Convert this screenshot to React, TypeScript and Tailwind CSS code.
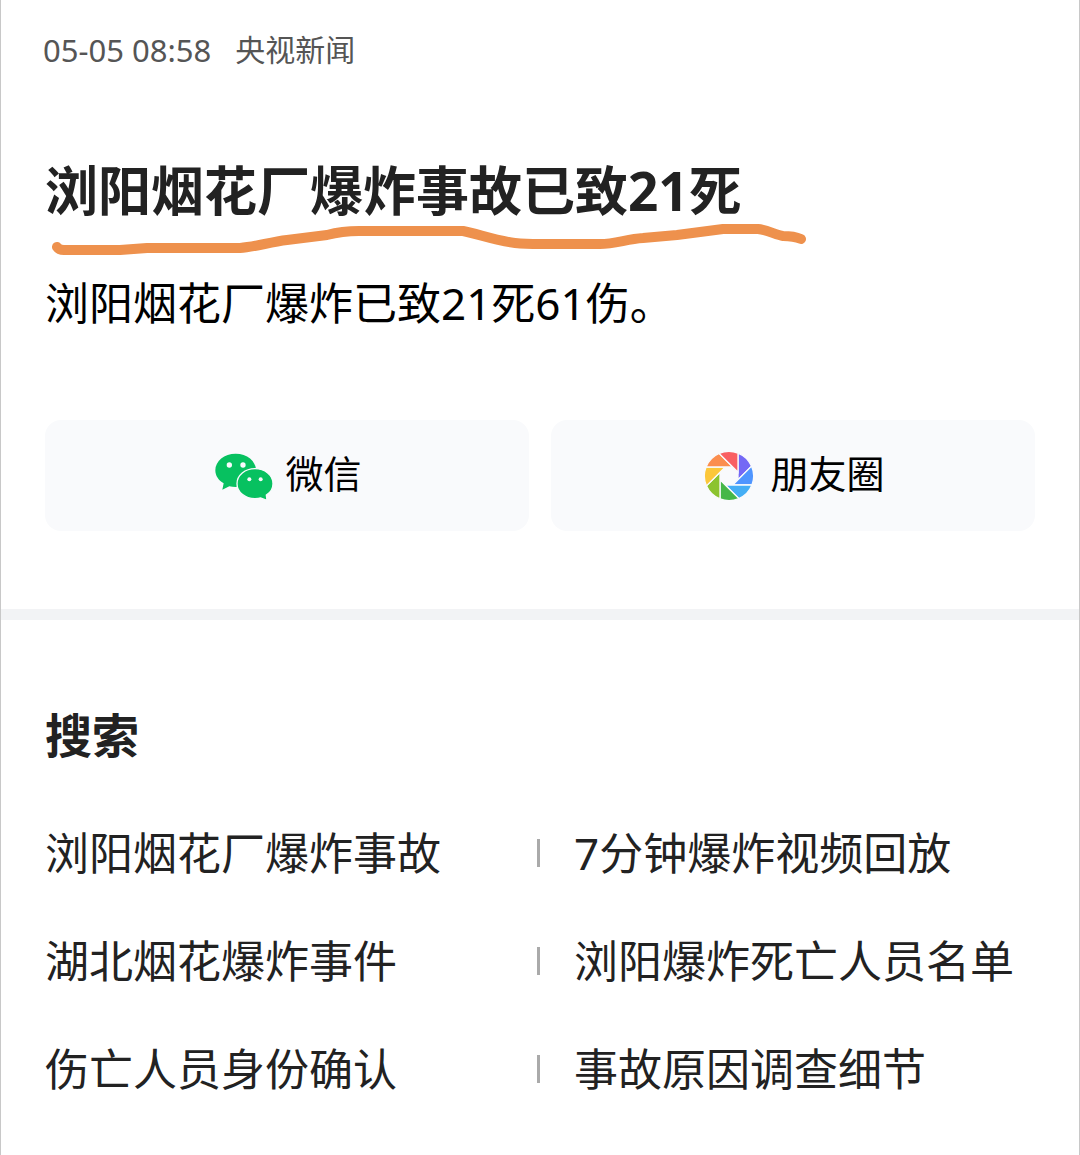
import React from 'react'

interface ShareButtonProps {
  icon: React.ReactNode
  label: string
}

interface SearchLinkProps {
  label: string
}

const searchRows = [
  ['浏阳烟花厂爆炸事故', '7分钟爆炸视频回放'],
  ['湖北烟花爆炸事件', '浏阳爆炸死亡人员名单'],
  ['伤亡人员身份确认', '事故原因调查细节'],
]

// clockwise, starting from the upper right blade
const bladeColors = ['#7468f5', '#4f95ff', '#45aef5', '#45b748', '#8cc32f', '#fcc73a', '#fb8e4f', '#f95f62']

function WeChatIcon() {
  return (
    <svg className="w-[58px] h-12 shrink-0" viewBox="45 55 174 144" aria-hidden="true">
      <path
        fill="#07c160"
        d="M107 60c34 0 61 22 61 50s-27 50-61 50c-7 0-13-1-19-2l-21 10 4-19c-16-9-25-23-25-39 0-28 27-50 61-50z"
      />
      <circle cx="88" cy="94" r="8" fill="#f9fafc" />
      <circle cx="129" cy="94" r="8" fill="#f9fafc" />
      <path
        fill="#07c160"
        stroke="#f9fafc"
        strokeWidth="4"
        d="M165 105c30 0 54 20 54 45 0 14-7 26-20 34l2 16-19-7c-6 2-11 2-17 2-30 0-54-20-54-45s24-45 54-45z"
      />
      <circle cx="148" cy="137" r="6" fill="#f9fafc" />
      <circle cx="182" cy="137" r="6" fill="#f9fafc" />
    </svg>
  )
}

function MomentsIcon() {
  return (
    <svg className="w-[50px] h-[50px] mr-1 shrink-0" viewBox="-75 -75 150 150" aria-hidden="true">
      {bladeColors.map((color, i) => (
        <path
          key={color}
          d="M27 11.2L27 -68.9A74 74 0 0 1 67.8 -29.6Z"
          fill={color}
          stroke="#f9fafc"
          strokeWidth="4"
          transform={`rotate(${i * 45})`}
        />
      ))}
    </svg>
  )
}

function Scribble() {
  return (
    <svg
      className="absolute left-0 top-16 w-[770px] h-9 pointer-events-none"
      viewBox="45 223 770 36"
      fill="none"
      aria-hidden="true"
    >
      <path
        d="M57 247Q59 250 64 250H120Q133 249 147 248H240C255 247 270 242 287 240L327 235Q342 231 359 231H463C478 234 497 241 515 243Q525 244 540 244H600C615 244 627 239 643 238L677 235L723 229H758C768 230 776 235 783 236Q794 236 801 239"
        stroke="#ee914d"
        strokeWidth="10"
        strokeLinecap="round"
        strokeLinejoin="round"
      />
    </svg>
  )
}

function ShareButton({ icon, label }: ShareButtonProps) {
  return (
    <button className="flex items-center justify-center gap-3 h-[111px] pl-[3px] rounded-2xl bg-[#f9fafc]">
      {icon}
      <span className="pb-1.5">{label}</span>
    </button>
  )
}

function SearchLink({ label }: SearchLinkProps) {
  return (
    <a href="#" className="text-[44px] leading-[60px] whitespace-nowrap">
      {label}
    </a>
  )
}

export default function App() {
  return (
    <div className="min-h-screen bg-white border-x border-[#c8c8c8] text-[#222222] font-['Noto_Sans','Noto_Sans_CJK_SC',sans-serif]">
      <header className="flex gap-6 px-[42px] pt-[30px] text-[30px] leading-10 text-[#555555]">
        <time className="text-[31px]">05-05 08:58</time>
        <span>央视新闻</span>
      </header>

      <main>
        <article className="px-11 pt-[89px] pb-[78px]">
          <div className="relative">
            <h1 className="text-[53px] leading-[64px] font-bold whitespace-nowrap">浏阳烟花厂爆炸事故已致21死</h1>
            <Scribble />
          </div>
          <p className="mt-[50px] text-[44px] leading-[60px] text-black">浏阳烟花厂爆炸已致21死61伤。</p>

          <div className="mt-[87px] grid grid-cols-2 gap-[22px] text-[38px] leading-[56px] text-black">
            <ShareButton icon={<WeChatIcon />} label="微信" />
            <ShareButton icon={<MomentsIcon />} label="朋友圈" />
          </div>
        </article>

        <div className="h-[11px] bg-[#f2f3f5]" />

        <section className="px-11 pt-[85px] pb-14">
          <h2 className="text-[47px] leading-[60px] font-bold">搜索</h2>
          <ul className="mt-[58px] flex flex-col gap-12">
            {searchRows.map(([left, right]) => (
              <li key={left} className="grid grid-cols-2">
                <div className="flex items-center justify-between">
                  <SearchLink label={left} />
                  <span className="w-[3px] h-7 bg-[#aaaaaa]" />
                </div>
                <div className="pl-[34px]">
                  <SearchLink label={right} />
                </div>
              </li>
            ))}
          </ul>
        </section>
      </main>
    </div>
  )
}
